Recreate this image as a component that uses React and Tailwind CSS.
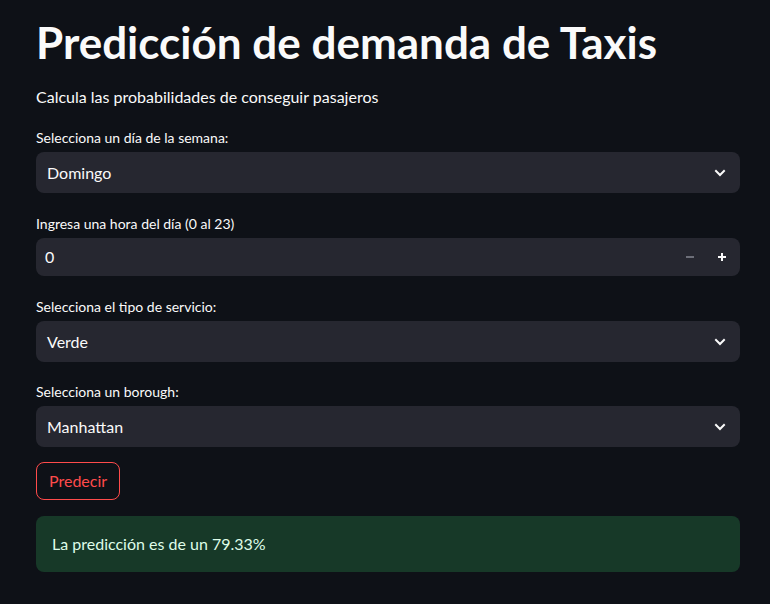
import { useState } from "react";

const FONT = { fontFamily: 'Lato, "Noto Sans", "Liberation Sans", sans-serif' };

function Chevron() {
  return (
    <svg width="16" height="16" viewBox="0 0 24 24" fill="none" stroke="#fafafa" strokeWidth="3" strokeLinecap="square">
      <path d="M6 9l6 6 6-6" />
    </svg>
  );
}

function Select({ label, value, className = "" }) {
  return (
    <div className={`flex flex-col ${className}`}>
      <label className="text-[14px] leading-[20px] text-[#fafafa] pt-[4px] mb-[4px]">{label}</label>
      <div className="h-[41px] bg-[#262730] rounded-[8px] flex items-center justify-between pl-[11px] pr-[12px]">
        <span className="text-[16px] text-[#fafafa]">{value}</span>
        <Chevron />
      </div>
    </div>
  );
}

export default function App() {
  const [hour] = useState(0);
  return (
    <div className="min-h-screen w-[770px] h-[604px] bg-[#0e1117] text-[#fafafa] overflow-hidden" style={FONT}>
      <div className="w-[704px] ml-[36px] pt-[14px] flex flex-col">
        <h1 className="text-[44px] font-bold leading-[56px]">Predicción de demanda de Taxis</h1>
        <p className="text-[16px] leading-[24px] mt-[15px]">Calcula las probabilidades de conseguir pasajeros</p>

        <div className="mt-[15px] flex flex-col gap-[17px]">
          <Select label="Selecciona un día de la semana:" value="Domingo" />

          <div className="flex flex-col">
            <label className="text-[14px] leading-[20px] text-[#fafafa] pt-[4px] mb-[4px]">Ingresa una hora del día (0 al 23)</label>
            <div className="h-[38px] bg-[#262730] rounded-[8px] flex items-center pl-[9px] pr-[2px]">
              <span className="text-[16px] flex-1">{hour}</span>
              <span className="w-[32px] flex justify-center text-[#6c6e78]">
                <svg width="10" height="10" viewBox="0 0 10 10"><rect x="1" y="4" width="8" height="2" fill="currentColor" /></svg>
              </span>
              <span className="w-[32px] flex justify-center text-[#fafafa]">
                <svg width="10" height="10" viewBox="0 0 10 10"><rect x="1" y="4" width="8" height="2" fill="currentColor" /><rect x="4" y="1" width="2" height="8" fill="currentColor" /></svg>
              </span>
            </div>
          </div>

          <Select label="Selecciona el tipo de servicio:" value="Verde" />
          <Select label="Selecciona un borough:" value="Manhattan" className="-mt-[1px]" />
        </div>

        <button className="mt-[15px] self-start h-[38px] px-[12px] rounded-[8px] border border-[#ff4b4b] text-[#ff4b4b] text-[16px]">Predecir</button>

        <div className="mt-[16px] h-[56px] rounded-[8px] bg-[#173928] flex items-center px-[16px]">
          <span className="text-[16px] text-[#dffde9]">La predicción es de un 79.33%</span>
        </div>
      </div>
    </div>
  );
}
